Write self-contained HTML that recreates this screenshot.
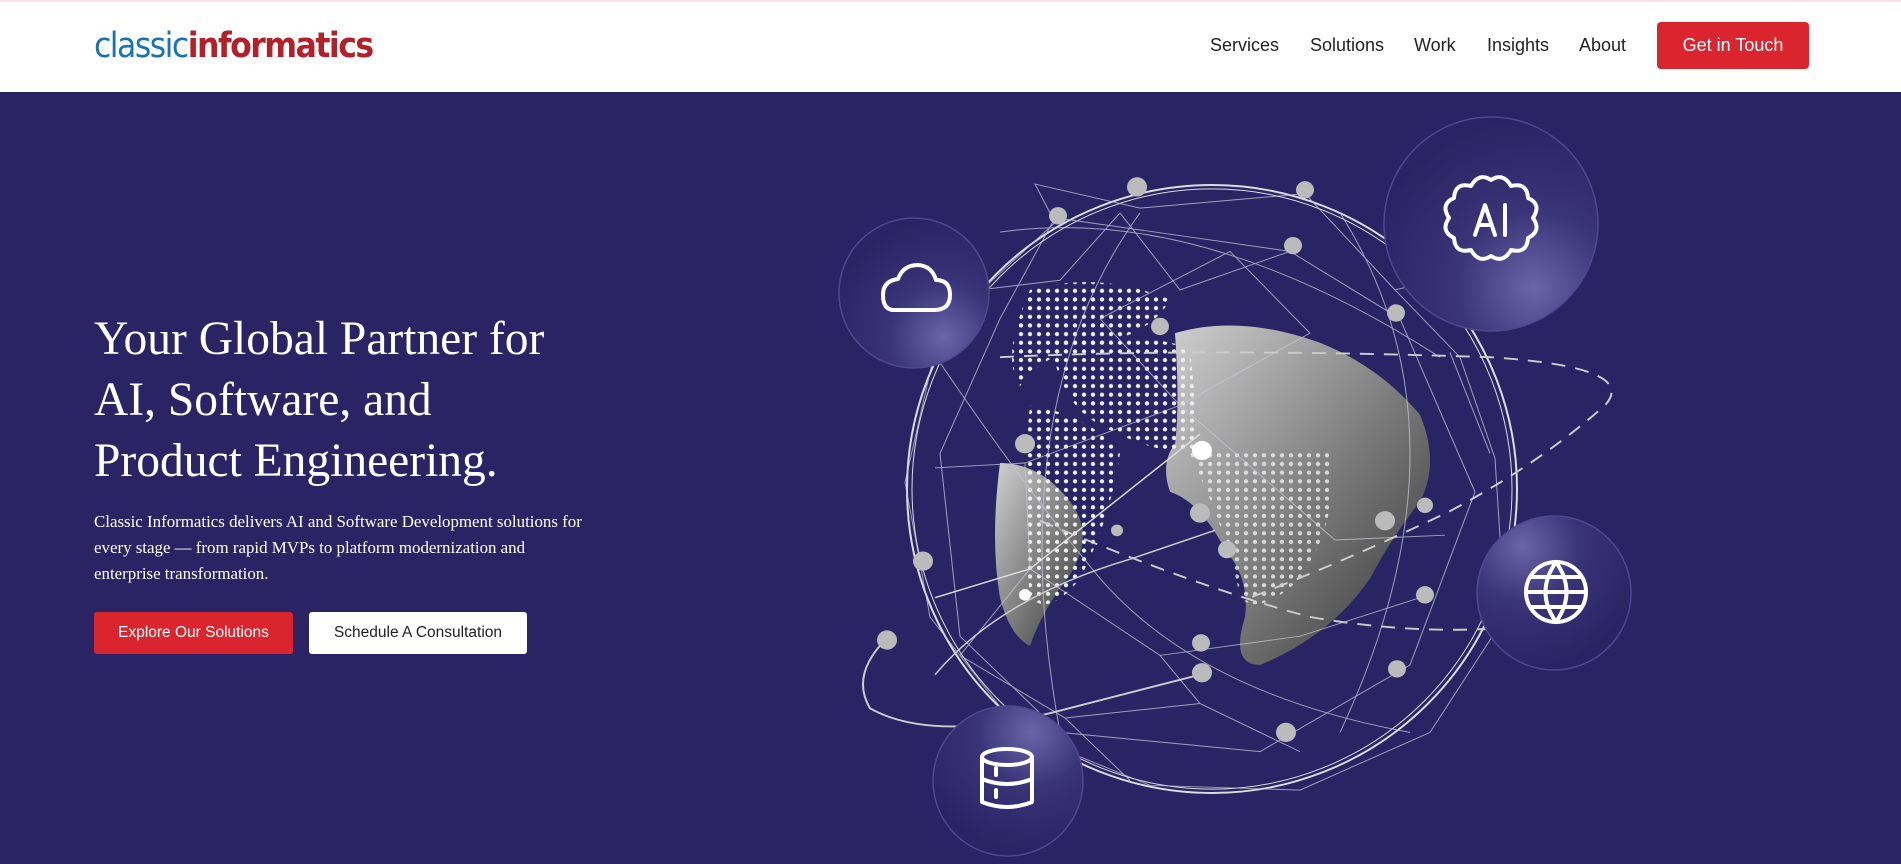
<!DOCTYPE html>
<html><head><meta charset="utf-8"><style>
*{margin:0;padding:0;box-sizing:border-box}
body{width:1901px;height:864px;overflow:hidden;background:#2a2464;font-family:"Liberation Sans",sans-serif;position:relative}
.top{position:absolute;left:0;top:0;width:1901px;height:92px;background:#fff;border-top:2px solid #f6e3ea}
.logo{position:absolute;left:94px;top:24px;font-size:35px;letter-spacing:-1.5px;font-family:"DejaVu Sans Condensed","Liberation Sans Narrow","Liberation Sans",sans-serif;}
.logo .a{color:#1a72b0}.logo .b{color:#b4202a;font-weight:bold}
.nav{position:absolute;top:33px;font-size:18px;color:#222}
.btn{position:absolute;left:1657px;top:20px;width:152px;height:47px;background:#da252e;border-radius:4px;color:#fff;font-size:18px;text-align:center;line-height:47px}
h1{position:absolute;left:94px;top:309px;font-family:"Liberation Serif",serif;font-weight:normal;color:#fff;font-size:47.5px;line-height:61px;width:620px}
p{position:absolute;left:94px;top:509px;font-family:"Liberation Serif",serif;color:#fff;font-size:16.9px;line-height:26px;width:560px;white-space:nowrap}
.b1,.b2{position:absolute;top:612px;height:42px;border-radius:3px;font-size:15.5px;text-align:center;line-height:42px}
.b1{left:94px;width:199px;background:#da252e;color:#fff}
.b2{left:309px;width:218px;background:#fff;color:#222}
svg{position:absolute;left:0;top:0}
</style></head><body>
<div class="top">
<div class="logo"><span class="a">classic</span><span class="b">informatics</span></div>
<div class="nav" style="left:1210px">Services</div>
<div class="nav" style="left:1310px">Solutions</div>
<div class="nav" style="left:1414px">Work</div>
<div class="nav" style="left:1487px">Insights</div>
<div class="nav" style="left:1579px">About</div>
<div class="btn">Get in Touch</div>
</div>
<h1>Your Global Partner for<br>AI, Software, and<br>Product Engineering.</h1>
<p>Classic Informatics delivers AI and Software Development solutions for<br>every stage — from rapid MVPs to platform modernization and<br>enterprise transformation.</p>
<div class="b1">Explore Our Solutions</div>
<div class="b2">Schedule A Consultation</div>
<svg width="1901" height="864" viewBox="0 0 1901 864">
<defs>
<linearGradient id="g" x1="0" y1="0" x2="1" y2="1"><stop offset="0" stop-color="#d0d0d0"/><stop offset="1" stop-color="#333"/></linearGradient>
<radialGradient id="c" cx="0.7" cy="0.8" r="0.8"><stop offset="0" stop-color="#6a65a8"/><stop offset="0.45" stop-color="#3a3478"/><stop offset="1" stop-color="#2a2464"/></radialGradient>
<pattern id="d" width="9" height="9" patternUnits="userSpaceOnUse"><circle cx="4" cy="4" r="2.2" fill="#eee"/></pattern>
</defs>
<g transform="translate(1212 489) scale(1 0.962) translate(-1212 -507)">
<g fill="url(#g)">
<path d="M1175 345 Q1240 325 1320 355 Q1380 380 1420 430 Q1440 480 1420 520 Q1390 560 1370 600 Q1330 660 1260 690 Q1230 690 1245 640 Q1250 600 1225 570 Q1200 520 1170 510 Q1160 480 1175 460 Q1180 420 1175 345Z"/>
<path d="M1000 480 Q1040 480 1070 520 Q1100 560 1060 610 Q1040 640 1030 670 Q1010 660 1000 620 Q990 560 1000 480Z"/>
</g>
<path d="M1030 300 Q1100 280 1170 310 Q1150 350 1080 360 Q1040 370 1020 400 Q1000 370 1030 300Z" fill="url(#d)"/>
<path d="M1050 350 Q1120 340 1190 360 L1200 470 Q1150 470 1100 440 Q1060 420 1050 350Z" fill="url(#d)"/>
<path d="M1030 420 Q1090 430 1120 470 Q1110 540 1080 600 Q1050 640 1030 620 Q1020 520 1030 420Z" fill="url(#d)"/>
<path d="M1190 470 Q1260 460 1330 470 Q1340 540 1300 600 Q1260 640 1240 620 Q1230 560 1190 470Z" fill="url(#d)" opacity=".8"/>
<g fill="none" stroke="#ddd" stroke-width="2">
<ellipse cx="1212" cy="507" rx="305" ry="316"/>
<ellipse cx="1212" cy="507" rx="300" ry="312" stroke-width="1"/>
</g>
<g fill="none" stroke="#c8c8d8" stroke-width="1" opacity=".75">
<path d="M1035 190 L1140 215 L1305 200 L1395 300 L1460 370 L1495 475 L1505 640 L1430 760 L1300 820 L1150 815 L1020 760 L930 640 L905 500 L940 340 L1055 230Z"/>
<path d="M1055 225 L1290 260 L1400 330 L1475 510 L1410 690 L1260 780 L1060 760 L960 660 L940 470 L1000 330Z"/>
<path d="M1100 330 L1230 260 L1310 345 L1180 420 L1100 330 M1180 420 L1025 480 L935 485 M1180 420 L1335 560 L1445 555 M1025 480 L1030 590 L1160 680 L1300 660 L1420 620 M1030 590 L960 680 L1065 745 L1200 730 L1300 780 M1160 680 L1200 730 M1065 745 L1130 810 M1450 365 L1490 470 M1395 300 L1480 280 M1120 220 L1180 300 L1290 260 M980 300 L1060 290 L1120 220"/>
<path d="M920 345 Q1020 500 1100 600 Q1200 720 1410 760"/>
<path d="M1000 240 Q1200 210 1440 370"/>
<path d="M1140 220 Q1000 420 1060 760"/>
<path d="M1340 220 Q1480 450 1340 760"/>
</g>
<g fill="none" stroke="#ccc" stroke-width="2" stroke-dasharray="14 10">
<path d="M1000 370 Q1200 360 1490 370 Q1640 380 1605 420 Q1540 480 1450 530 Q1350 580 1250 620"/>
<path d="M1040 540 Q1200 610 1310 640 Q1420 660 1520 650"/>
</g>
<path d="M887 662 Q850 700 870 735 Q930 770 1050 740 L1200 700" fill="none" stroke="#ccc" stroke-width="2"/>
<path d="M935 700 Q1000 620 1130 580 L1215 550" fill="none" stroke="#ccc" stroke-width="1.5"/>
<path d="M935 620 L1030 590 L1200 450" fill="none" stroke="#ddd" stroke-width="1.5"/>
<g fill="#bbb">
<circle cx="1137" cy="193" r="10"/><circle cx="1305" cy="196" r="9"/><circle cx="1058" cy="223" r="9"/><circle cx="1293" cy="254" r="9"/><circle cx="1396" cy="324" r="9"/><circle cx="1025" cy="460" r="10"/><circle cx="1200" cy="532" r="10"/><circle cx="923" cy="582" r="10"/><circle cx="1227" cy="570" r="9"/><circle cx="1201" cy="667" r="9"/><circle cx="1117" cy="550" r="6"/><circle cx="887" cy="664" r="10"/><circle cx="1202" cy="698" r="10"/><circle cx="1286" cy="760" r="10"/><circle cx="1385" cy="540" r="10"/><circle cx="1425" cy="617" r="9"/><circle cx="1397" cy="694" r="9"/><circle cx="1425" cy="524" r="8"/><circle cx="1160" cy="338" r="9"/>
</g>
<circle cx="1202" cy="467" r="10" fill="#fff"/><circle cx="1025" cy="617" r="6" fill="#fff"/>
</g>
<g stroke="#4e4890" stroke-width="1.5">
<circle cx="914" cy="293" r="75" fill="url(#c)"/>
<circle cx="1491" cy="224" r="107" fill="url(#c)"/>
<circle cx="1554" cy="593" r="77" fill="url(#c)" transform="rotate(180 1554 593)"/>
<circle cx="1008" cy="781" r="75" fill="url(#c)" transform="rotate(-120 1008 781)"/>
</g>
<g fill="none" stroke="#fff" stroke-width="4" stroke-linecap="round" stroke-linejoin="round">
<path d="M894 310 H934 Q950 310 950 295 Q950 280 936 280 Q932 266 918 265 Q903 265 898 279 Q883 281 883 295 Q883 310 894 310Z"/>
<path d="M1491 180 q12 -8 20 6 q16 -4 17 12 q14 6 5 20 q9 13 -5 20 q-1 16 -17 12 q-8 14 -20 6 q-12 8 -20 -6 q-16 4 -17 -12 q-14 -7 -5 -20 q-9 -14 5 -20 q1 -16 17 -12 q8 -14 20 -6Z"/>
<path d="M1475 235 L1485 205 L1495 235 M1479 225 H1491 M1505 205 V235"/>
<circle cx="1556" cy="592" r="30"/><path d="M1526 592 H1586 M1531 577 H1581 M1531 607 H1581 M1556 562 Q1535 592 1556 622 Q1577 592 1556 562"/>
<ellipse cx="1007" cy="757" rx="25" ry="8"/><path d="M982 757 V802 Q1007 812 1032 802 V757 M982 779 Q1007 789 1032 779 M996 768 V775 M996 790 V797"/>
</g>
</svg>
</body></html>
